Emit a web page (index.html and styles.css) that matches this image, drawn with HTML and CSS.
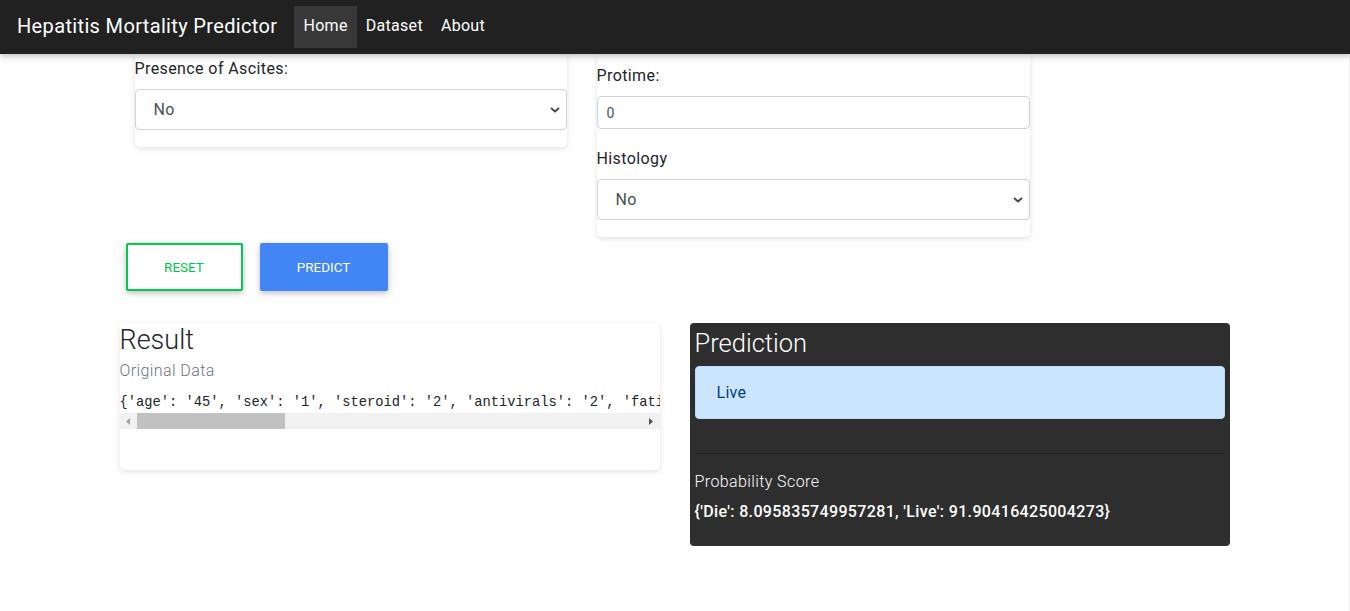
FILE: index.html
```html
<!DOCTYPE html>
<html lang="en">
<head>
<meta charset="utf-8">
<title>Hepatitis Mortality Predictor</title>
<link rel="stylesheet" href="styles.css">
</head>
<body>
<nav class="navbar">
  <a class="brand" href="#">Hepatitis Mortality Predictor</a>
  <ul class="nav">
    <li><a class="nav-link active" href="#">Home</a></li>
    <li><a class="nav-link" href="#">Dataset</a></li>
    <li><a class="nav-link" href="#">About</a></li>
  </ul>
</nav>
<main class="page">
  <div class="container">
    <form class="form-row">
      <div class="form-card card-left">
        <label class="form-label">Presence of Ascites:</label>
        <select class="form-select"><option>No</option><option>Yes</option></select>
      </div>
      <div class="form-card card-right">
        <label class="form-label">Protime:</label>
        <input class="form-input" type="text" value="0">
        <label class="form-label label-gap">Histology</label>
        <select class="form-select"><option>No</option><option>Yes</option></select>
      </div>
    </form>
    <div class="btn-row">
      <button class="btn btn-outline" type="button">Reset</button>
      <button class="btn btn-primary" type="button">Predict</button>
    </div>
    <div class="result-row">
      <section class="result-card">
        <h3 class="card-title result-title">Result</h3>
        <h6 class="sub-title">Original Data</h6>
        <pre class="data">{'age': '45', 'sex': '1', 'steroid': '2', 'antivirals': '2', 'fatigue': '2', 'spiders': '2', 'ascites': '2', 'varices': '2', 'bilirubin': '0', 'alk_phosphate': '0', 'sgot': '0', 'albumin': '0', 'protime': '0', 'histology': '1'}</pre>
        <div class="hscroll" aria-hidden="true">
          <span class="sb-btn"><svg width="4" height="7" viewBox="0 0 4 7"><path d="M4 0v7L0 3.5z" fill="#a3a3a3"/></svg></span>
          <div class="sb-track"><div class="sb-thumb"></div></div>
          <span class="sb-btn"><svg width="4" height="7" viewBox="0 0 4 7"><path d="M0 0v7l4-3.5z" fill="#505050"/></svg></span>
        </div>
      </section>
      <section class="pred-card">
        <h3 class="card-title pred-title">Prediction</h3>
        <div class="alert">Live</div>
        <hr class="divider">
        <p class="prob-label">Probability Score</p>
        <p class="prob-value">{'Die': 8.095835749957281, 'Live': 91.90416425004273}</p>
      </section>
    </div>
  </div>
</main>
</body>
</html>
```

FILE: styles.css
```css
* { box-sizing: border-box; }

html, body {
  margin: 0;
  padding: 0;
  background: #fff;
  font-family: Roboto, "Liberation Sans", Arial, sans-serif;
  color: #212529;
  font-size: 16px;
}

.navbar {
  height: 54px;
  background: #212121;
  display: flex;
  align-items: center;
  padding: 0 0 0 17px;
  box-shadow: 0 2px 5px 0 rgba(0,0,0,.16), 0 2px 10px 0 rgba(0,0,0,.12);
  position: relative;
  z-index: 2;
}

.brand {
  color: #fff;
  font-size: 20px;
  letter-spacing: 0.35px;
  text-decoration: none;
  margin-right: 17px;
  line-height: 30px;
  margin-top: -2px;
}

.nav {
  list-style: none;
  margin: 0;
  padding: 0;
  display: flex;
  align-items: center;
}

.nav-link {
  display: block;
  color: #fff;
  text-decoration: none;
  font-size: 16px;
  letter-spacing: 0.3px;
  padding: 0 9px;
  height: 42px;
  line-height: 40px;
}

.nav-link.active { background: #383838; }

.page {
  border-right: 1px solid #ececec;
  min-height: 557px;
}

.container {
  width: 1110px;
  margin: 0 auto;
}

.form-row {
  display: flex;
  align-items: flex-start;
  gap: 30px;
  padding-left: 15px;
  margin: 0;
}

.form-card {
  width: 432px;
  background: #fff;
  border-radius: 0 0 5px 5px;
  box-shadow: 0 2px 5px 0 rgba(0,0,0,.07), 0 2px 10px 0 rgba(0,0,0,.05);
  display: flex;
  flex-direction: column;
}

.card-left { padding: 3px 0 17px; }
.card-right { padding: 10px 0 17px; width: 433px; }

.form-label {
  display: block;
  font-size: 16px;
  letter-spacing: 0.4px;
  line-height: 24px;
  margin-bottom: 8px;
  color: #212529;
}

.label-gap { margin-top: 18px; margin-bottom: 8px; }

.form-select {
  -webkit-appearance: none;
  appearance: none;
  height: 41px;
  width: 100%;
  border: 1px solid #ced4da;
  border-radius: 4px;
  background: #fff url("data:image/svg+xml;utf8,<svg xmlns='http://www.w3.org/2000/svg' width='10' height='6' viewBox='0 0 10 6'><path d='M1 1l4 3.5L9 1' fill='none' stroke='%23444' stroke-width='1.8'/></svg>") no-repeat right 6px center;
  font-family: Roboto, "Liberation Sans", Arial, sans-serif;
  font-size: 16px;
  letter-spacing: 0.3px;
  color: #495057;
  padding: 0 18px;
}

.form-input {
  height: 33px;
  width: 100%;
  border: 1px solid #ced4da;
  border-radius: 4px;
  font-family: Roboto, "Liberation Sans", Arial, sans-serif;
  font-size: 14px;
  color: #495057;
  padding: 0 9px;
}

.btn-row {
  display: flex;
  gap: 17px;
  margin: 6px 0 0 6px;
}

.btn {
  height: 48px;
  display: inline-flex;
  align-items: center;
  justify-content: center;
  font-family: Roboto, "Liberation Sans", Arial, sans-serif;
  font-size: 13.5px;
  text-transform: uppercase;
  border-radius: 2px;
  box-shadow: 0 2px 5px 0 rgba(0,0,0,.16), 0 2px 10px 0 rgba(0,0,0,.12);
  cursor: pointer;
}

.btn-outline {
  width: 117px;
  background: #fff;
  border: 2px solid #00c851;
  color: #00c851;
}

.btn-primary {
  width: 128px;
  background: #4285f4;
  border: 0;
  color: #fff;
}

.result-row {
  display: flex;
  gap: 30px;
  margin-top: 32px;
  align-items: flex-start;
}

.result-card {
  width: 540px;
  height: 147px;
  background: #fff;
  border-radius: 5px;
  box-shadow: 0 2px 5px 0 rgba(0,0,0,.07), 0 2px 10px 0 rgba(0,0,0,.05);
}

.card-title {
  margin: 0;
  font-weight: 300;
  line-height: 34px;
}

.result-title { font-size: 27px; color: #212529; }

.sub-title {
  margin: 2px 0 0;
  font-size: 16px;
  font-weight: 300;
  letter-spacing: 0.4px;
  line-height: 24px;
  color: #6c757d;
}

.data {
  margin: 10px 0 0;
  font-family: "Liberation Mono", "DejaVu Sans Mono", monospace;
  font-size: 13.75px;
  line-height: 20px;
  color: #212529;
  overflow: hidden;
  white-space: pre;
}

.hscroll {
  display: flex;
  height: 16px;
  background: #f1f1f1;
}

.sb-btn {
  width: 17px;
  flex: none;
  display: flex;
  align-items: center;
  justify-content: center;
}

.sb-track {
  flex: 1;
  display: flex;
  align-items: stretch;
}

.sb-thumb {
  width: 148px;
  background: #c1c1c1;
}

.pred-card {
  width: 540px;
  background: #2e2e2e;
  border-radius: 4px;
  padding: 3px 5px 22px;
  color: #fff;
}

.pred-title { font-size: 25.5px; color: #fff; }

.alert {
  margin-top: 6px;
  background: #cce5ff;
  border: 1px solid #b8daff;
  color: #004085;
  border-radius: 4px;
  padding: 14px 21px 13px;
  line-height: 24px;
  font-size: 16px;
  letter-spacing: 0.3px;
}

.divider {
  border: 0;
  border-top: 1px solid #222;
  margin: 34px 0 0;
}

.prob-label {
  margin: 16px 0 0;
  font-size: 16px;
  font-weight: 300;
  letter-spacing: 0.4px;
  line-height: 24px;
}

.prob-value {
  margin: 6px 0 0;
  font-size: 16px;
  font-weight: 500;
  letter-spacing: 0.35px;
  line-height: 24px;
}
```
